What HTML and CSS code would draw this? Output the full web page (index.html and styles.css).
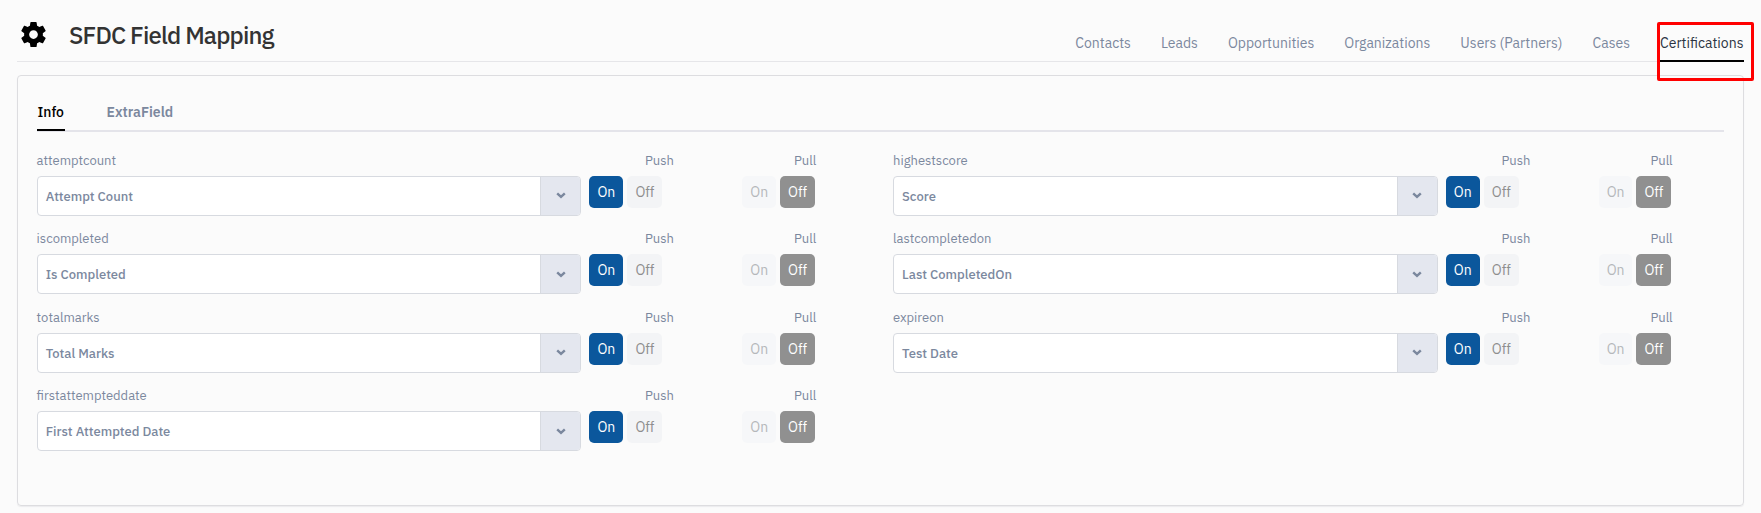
FILE: index.html
```html
<!DOCTYPE html>
<html lang="en">
<head>
<meta charset="utf-8">
<title>SFDC Field Mapping</title>
<link rel="stylesheet" href="styles.css">
</head>
<body>
<svg class="symbols" width="0" height="0">
  <symbol id="chevron" viewBox="0 0 10 7"><path d="M1.2 1.3 5 4.9 8.8 1.3" fill="none" stroke="currentColor" stroke-width="2.4"/></symbol>
</svg>
<header class="header">
  <svg class="gear" viewBox="2 2 20 20"><path d="M19.43 12.98c.04-.32.07-.64.07-.98s-.03-.66-.07-.98l2.11-1.65c.19-.15.24-.42.12-.64l-2-3.46c-.12-.22-.39-.3-.61-.22l-2.49 1c-.52-.4-1.08-.73-1.69-.98l-.38-2.65C14.46 2.18 14.25 2 14 2h-4c-.25 0-.46.18-.49.42l-.38 2.65c-.61.25-1.17.59-1.69.98l-2.49-1c-.23-.09-.49 0-.61.22l-2 3.46c-.13.22-.07.49.12.64l2.11 1.65c-.04.32-.07.65-.07.98s.03.66.07.98l-2.11 1.65c-.19.15-.24.42-.12.64l2 3.46c.12.22.39.3.61.22l2.49-1c.52.4 1.08.73 1.69.98l.38 2.65c.03.24.24.42.49.42h4c.25 0 .46-.18.49-.42l.38-2.65c.61-.25 1.17-.59 1.69-.98l2.49 1c.23.09.49 0 .61-.22l2-3.46c.12-.22.07-.49-.12-.64l-2.11-1.65zM12 15.5c-1.93 0-3.5-1.57-3.5-3.5s1.57-3.5 3.5-3.5 3.5 1.57 3.5 3.5-1.57 3.5-3.5 3.5z"/></svg>
  <h1 class="title">SFDC Field Mapping</h1>
  <nav class="nav">
    <a class="nav-item">Contacts</a>
    <a class="nav-item">Leads</a>
    <a class="nav-item">Opportunities</a>
    <a class="nav-item">Organizations</a>
    <a class="nav-item">Users (Partners)</a>
    <a class="nav-item">Cases</a>
    <a class="nav-item active">Certifications<span class="highlight"></span></a>
  </nav>
</header>
<main class="panel">
  <div class="tabs">
    <a class="tab active">Info</a>
    <a class="tab">ExtraField</a>
  </div>
  <div class="fields" id="fields"></div>
</main>
<script src="fields.js"></script>
</body>
</html>
```
FILE: styles.css
```css
* { box-sizing: border-box; }
body {
  margin: 0;
  padding: 0 17px;
  height: 513px;
  overflow: hidden;
  background: #fbfbfb;
  color: #7b889e;
  font-family: "IBM Plex Sans", Roboto, sans-serif;
  font-size: 13px;
}
.symbols { position: absolute; }
.header {
  display: flex;
  height: 62px;
  border-bottom: 1px solid #e6e6e9;
}
.gear { width: 25px; height: 25px; margin: 22px 0 0 4px; }
.title {
  margin: 20px 0 0 23px;
  font-size: 24px;
  line-height: 31px;
  font-weight: 500;
  letter-spacing: -0.84px;
  color: #333;
}
.nav { display: flex; gap: 30px; margin-left: auto; height: 62px; }
.nav-item {
  position: relative;
  padding-top: 34px;
  height: 62px;
  font-size: 14px;
  line-height: 18px;
  white-space: nowrap;
}
.nav-item.active { width: 84px; color: #2b3442; border-bottom: 2px solid #000; }
.highlight {
  position: absolute;
  top: 22px;
  left: -3px;
  width: 97px;
  height: 59px;
  border: 3px solid #f00;
  border-radius: 2px;
}
.panel {
  margin-top: 13px;
  height: 431px;
  padding: 0 19px;
  border: 1px solid #dddde0;
  border-radius: 4px;
  box-shadow: 0 1px 1px #ececee;
}
.tabs {
  display: flex;
  gap: 41px;
  height: 56px;
  padding-top: 26px;
  border-bottom: 2px solid #e4e4ea;
}
.tab {
  height: 29px;
  padding: 1px 0 0 0.5px;
  font-size: 14px;
  line-height: 18px;
  font-weight: 600;
}
.tab.active { width: 28px; color: #000; border-bottom: 2px solid #000; font-weight: 500; }
.fields {
  display: grid;
  grid-template-columns: 856.4px 1fr;
  grid-auto-rows: 78.4px;
  padding-top: 20px;
}
.field {
  display: grid;
  grid-template-columns: 544.4px 242px;
  grid-template-rows: 17.2px 40px;
  row-gap: 6.8px;
  column-gap: 8px;
}
.label { line-height: 18.4px; margin-left: -0.4px; }
.heads { display: flex; line-height: 18.4px; }
.push-head { width: 149px; margin-left: 55.6px; }
.select {
  display: flex;
  height: 40px;
  border: 1px solid #d7dae0;
  border-radius: 4px;
  background: #fff;
  overflow: hidden;
}
.value { flex: 1; padding-left: 7.7px; line-height: 39px; font-weight: 500; }
.arrow {
  display: flex;
  align-items: center;
  justify-content: center;
  width: 40px;
  background: #e4e7ef;
  border-left: 1px solid #d7dae0;
}
.arrow svg { width: 10px; height: 7px; }
.toggles { display: flex; gap: 4px; }
.btn {
  width: 34px;
  height: 32px;
  border-radius: 5px;
  font-size: 14px;
  line-height: 32px;
  text-align: center;
  background: #f3f4f6;
  color: #8e8e8e;
}
.btn.off { width: 35px; }
.btn.primary { background: #0b579c; color: #fff; }
.btn.muted { width: 33.6px; margin-left: 76px; background: #f6f7f9; color: #b5b7bb; }
.btn.dark { background: #909090; color: #fff; }
```
FILE: fields.js
```js
const fields = [
  ["attemptcount", "Attempt Count"],
  ["highestscore", "Score"],
  ["iscompleted", "Is Completed"],
  ["lastcompletedon", "Last CompletedOn"],
  ["totalmarks", "Total Marks"],
  ["expireon", "Test Date"],
  ["firstattempteddate", "First Attempted Date"],
];
document.getElementById("fields").innerHTML = fields.map(([label, value]) => `
  <div class="field">
    <div class="label">${label}</div>
    <div class="heads"><span class="push-head">Push</span><span>Pull</span></div>
    <div class="select"><span class="value">${value}</span><span class="arrow"><svg><use href="#chevron"/></svg></span></div>
    <div class="toggles">
      <span class="btn primary">On</span><span class="btn off">Off</span>
      <span class="btn muted">On</span><span class="btn off dark">Off</span>
    </div>
  </div>`).join("");
```
